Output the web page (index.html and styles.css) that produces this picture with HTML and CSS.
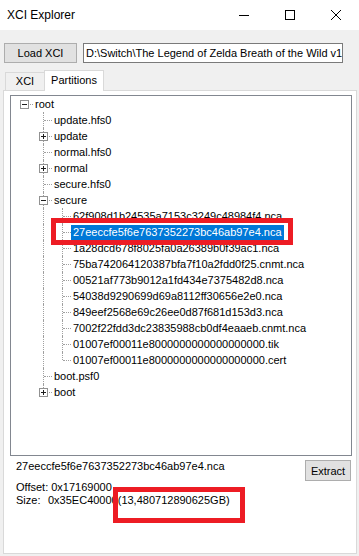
FILE: index.html
```html
<!DOCTYPE html>
<html lang="en">
<head>
    <meta charset="UTF-8">
    <meta name="viewport" content="width=device-width, initial-scale=1.0">
    <title>XCI Explorer</title>
    <link rel="stylesheet" href="styles.css">
</head>
<body>

<div class="window">
    <div class="titlebar">
        <span class="title">XCI Explorer</span>
        <div class="caption">
            <span class="cap-btn"><svg width="10" height="10" viewBox="0 0 10 10"><path d="M0 5.5H10" stroke="#000" stroke-width="1"/></svg></span>
            <span class="cap-btn"><svg width="10" height="10" viewBox="0 0 10 10"><rect x="0.5" y="0.5" width="9" height="9" fill="none" stroke="#000" stroke-width="1"/></svg></span>
            <span class="cap-btn"><svg width="10" height="10" viewBox="0 0 10 10"><path d="M0 0L10 10M10 0L0 10" stroke="#000" stroke-width="1"/></svg></span>
        </div>
    </div>

    <div class="content">
        <div class="toolbar">
            <button class="btn load-btn">Load XCI</button>
            <div class="path-box">D:\Switch\The Legend of Zelda Breath of the Wild v1.3.1.xci</div>
        </div>

        <div class="tabs">
            <div class="tab">XCI</div>
            <div class="tab active">Partitions</div>
        </div>

        <div class="tab-page">
            <div class="tree">
                <div class="node"><span class="g r"><span class="box minus"></span></span><span class="label">root</span></div>
                <div class="node"><span class="g"></span><span class="g t"></span><span class="label">update.hfs0</span></div>
                <div class="node"><span class="g"></span><span class="g t"><span class="box plus"></span></span><span class="label">update</span></div>
                <div class="node"><span class="g"></span><span class="g t"></span><span class="label">normal.hfs0</span></div>
                <div class="node"><span class="g"></span><span class="g t"><span class="box plus"></span></span><span class="label">normal</span></div>
                <div class="node"><span class="g"></span><span class="g t"></span><span class="label">secure.hfs0</span></div>
                <div class="node"><span class="g"></span><span class="g t"><span class="box minus"></span></span><span class="label">secure</span></div>
                <div class="node"><span class="g"></span><span class="g v"></span><span class="g t"></span><span class="label">62f908d1b24535a7153c3249c48984f4.nca</span></div>
                <div class="node"><span class="g"></span><span class="g v"></span><span class="g t"></span><span class="label selected">27eeccfe5f6e7637352273bc46ab97e4.nca</span></div>
                <div class="node"><span class="g"></span><span class="g v"></span><span class="g t"></span><span class="label">1a28dcd678f8025fa0a26389b0f39ac1.nca</span></div>
                <div class="node"><span class="g"></span><span class="g v"></span><span class="g t"></span><span class="label">75ba742064120387bfa7f10a2fdd0f25.cnmt.nca</span></div>
                <div class="node"><span class="g"></span><span class="g v"></span><span class="g t"></span><span class="label">00521af773b9012a1fd434e7375482d8.nca</span></div>
                <div class="node"><span class="g"></span><span class="g v"></span><span class="g t"></span><span class="label">54038d9290699d69a8112ff30656e2e0.nca</span></div>
                <div class="node"><span class="g"></span><span class="g v"></span><span class="g t"></span><span class="label">849eef2568e69c26ee0d87f681d153d3.nca</span></div>
                <div class="node"><span class="g"></span><span class="g v"></span><span class="g t"></span><span class="label">7002f22fdd3dc23835988cb0df4eaaeb.cnmt.nca</span></div>
                <div class="node"><span class="g"></span><span class="g v"></span><span class="g t"></span><span class="label">01007ef00011e8000000000000000000.tik</span></div>
                <div class="node"><span class="g"></span><span class="g v"></span><span class="g l"></span><span class="label">01007ef00011e8000000000000000000.cert</span></div>
                <div class="node"><span class="g"></span><span class="g t"></span><span class="label">boot.psf0</span></div>
                <div class="node"><span class="g"></span><span class="g l"><span class="box plus"></span></span><span class="label">boot</span></div>
            </div>

            <div class="info-row">
                <div class="info-name">27eeccfe5f6e7637352273bc46ab97e4.nca</div>
                <button class="btn extract-btn">Extract</button>
            </div>
            <div class="info-line">Offset: 0x17169000</div>
            <div class="info-line"><span class="info-key">Size:</span>0x35EC40000(13,480712890625GB)</div>
        </div>
    </div>

    <div class="mark mark-node"></div>
    <div class="mark mark-size"></div>
</div>

</body>
</html>
```

FILE: styles.css
```css
body {
    margin: 0;
    font-family: "Liberation Sans", Arial, sans-serif;
    font-size: 11px;
    color: #000;
    background-color: #f0f0f0;
}
.window {
    position: relative;
    width: 359px;
    height: 556px;
    overflow: hidden;
}
.titlebar {
    height: 30px;
    background: #fff;
    display: flex;
    align-items: center;
}
.title {
    flex: 1;
    padding-left: 7px;
    font-size: 12px;
}
.caption {
    display: flex;
    height: 30px;
}
.cap-btn {
    width: 46px;
    display: flex;
    align-items: center;
    justify-content: center;
}
.content {
    padding: 13px 0 0 3px;
}
.toolbar {
    display: flex;
    gap: 6px;
    margin-left: 1px;
    height: 20px;
}
.btn {
    font: inherit;
    color: #000;
    background-color: #e1e1e1;
    border: 1px solid #adadad;
    padding: 0;
    box-sizing: border-box;
}
.load-btn {
    width: 73px;
    height: 20px;
}
.path-box {
    box-sizing: border-box;
    width: 260px;
    height: 20px;
    border: 1px solid #7a7a7a;
    background: #fff;
    padding: 0 2px;
    line-height: 18px;
    white-space: nowrap;
    overflow: hidden;
}
.tabs {
    display: flex;
    align-items: flex-end;
    height: 20px;
    margin-top: 7px;
    padding-left: 2px;
}
.tab {
    box-sizing: border-box;
    width: 40px;
    height: 18px;
    line-height: 17px;
    text-align: center;
    border: 1px solid #d9d9d9;
    border-bottom: none;
    background: #f0f0f0;
}
.tab.active {
    width: 60px;
    height: 21px;
    line-height: 18px;
    margin-left: -1px;
    margin-bottom: -1px;
    background: #fff;
    position: relative;
    z-index: 1;
}
.tab-page {
    box-sizing: border-box;
    width: 354px;
    height: 464px;
    border: 1px solid #d9d9d9;
    background: #fff;
    padding: 4px 0 0 6px;
}
.tree {
    box-sizing: border-box;
    width: 342px;
    height: 361px;
    border: 1px solid #828790;
    padding-left: 3px;
}
.node {
    display: flex;
    height: 16px;
}
.g {
    position: relative;
    flex: none;
    width: 19px;
    height: 16px;
}
.g.v::before, .g.t::before, .g.l::before {
    content: "";
    position: absolute;
    left: 10px;
    top: 0;
    height: 16px;
    border-left: 1px dotted #a0a0a0;
}
.g.l::before {
    height: 8px;
}
.g.t::after, .g.l::after, .g.r::after {
    content: "";
    position: absolute;
    left: 11px;
    top: 8px;
    width: 8px;
    border-top: 1px dotted #a0a0a0;
}
.box {
    position: absolute;
    left: 6px;
    top: 4px;
    width: 9px;
    height: 9px;
    box-sizing: border-box;
    border: 1px solid #919191;
    background: #fff;
    z-index: 1;
}
.box::before {
    content: "";
    position: absolute;
    left: 1px;
    top: 3px;
    width: 5px;
    height: 1px;
    background: #1e1e1e;
}
.box.plus::after {
    content: "";
    position: absolute;
    left: 3px;
    top: 1px;
    width: 1px;
    height: 5px;
    background: #1e1e1e;
}
.label {
    padding: 0 2px;
    line-height: 16px;
    white-space: nowrap;
}
.label.selected {
    background: #0078d7;
    color: #fff;
    line-height: 15px;
    height: 15px;
    margin-top: 1px;
}
.info-row {
    display: flex;
    justify-content: space-between;
    align-items: flex-start;
    margin-top: 4px;
}
.info-name {
    margin-left: 6px;
    line-height: 13px;
}
.extract-btn {
    width: 46px;
    height: 21px;
    margin-right: 5px;
}
.info-line {
    margin-left: 6px;
    line-height: 13px;
}
.info-line:first-of-type {
    margin-top: 1px;
}
.info-key {
    display: inline-block;
    width: 32px;
}
.mark {
    position: absolute;
    box-sizing: border-box;
    border: 5px solid #ed1c24;
    z-index: 2;
}
.mark-node {
    left: 51px;
    top: 218px;
    width: 242px;
    height: 27px;
}
.mark-size {
    left: 113px;
    top: 487px;
    width: 132px;
    height: 36px;
}
```
